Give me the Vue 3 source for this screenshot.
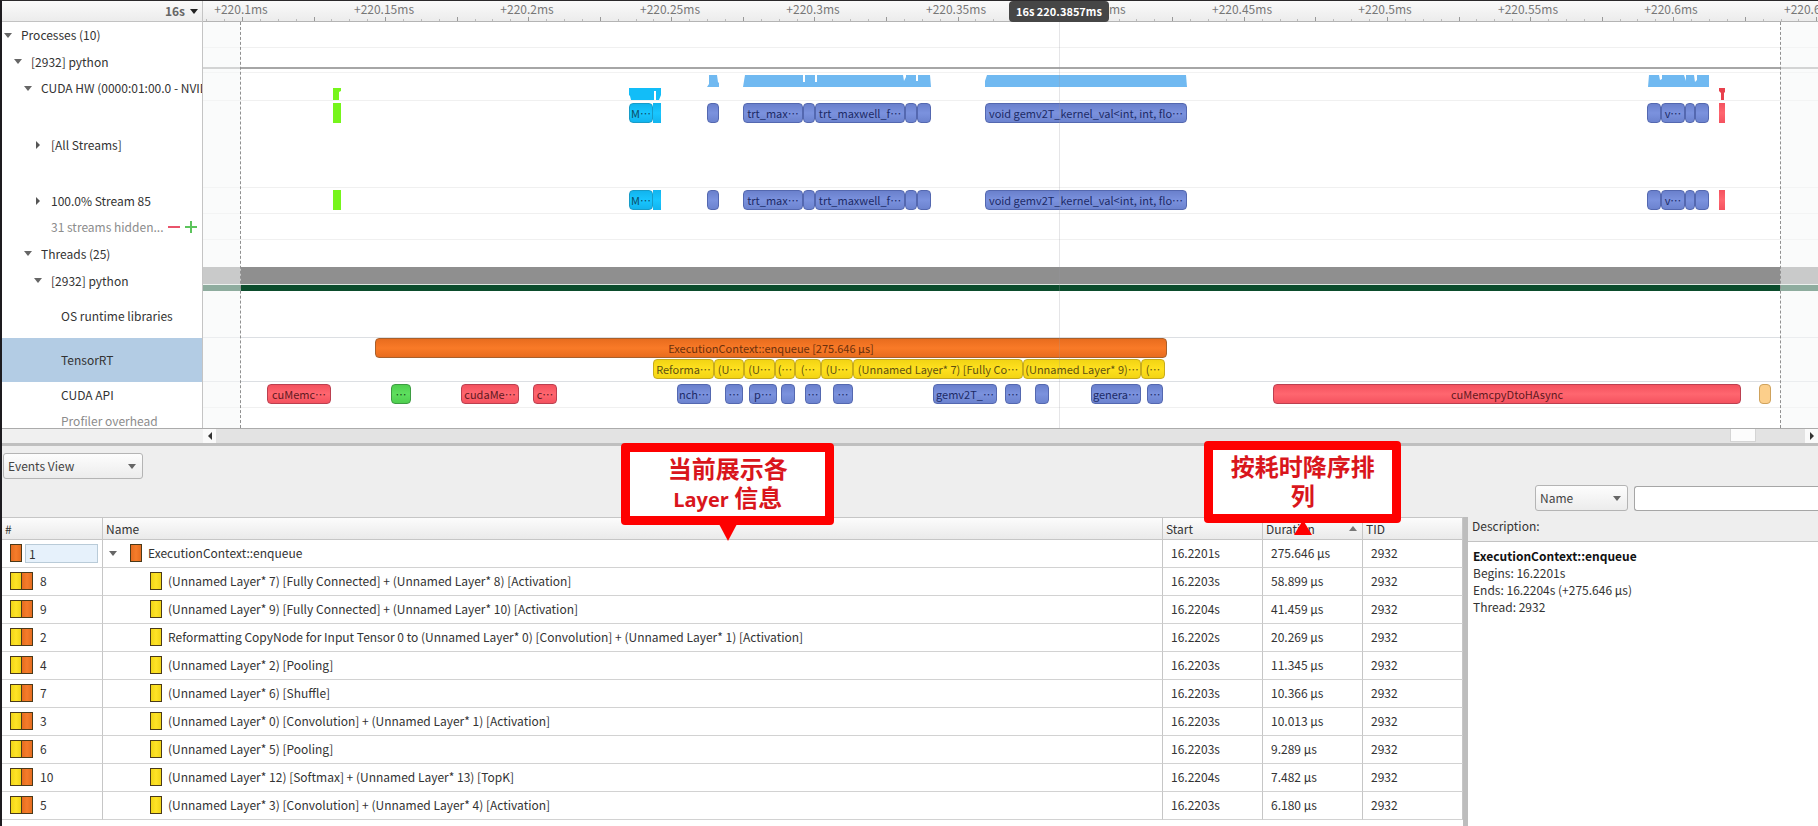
<script setup>
import { ref } from 'vue'

const SPAN = 1615
const pct = (v) => `${(v / SPAN) * 100}%`
const place = (b) => ({ left: pct(b[0] - 203), width: pct(b[1] - b[0]) })

const labels = ['+220.1ms', '+220.15ms', '+220.2ms', '+220.25ms', '+220.3ms', '+220.35ms', '+220.4ms', '+220.45ms', '+220.5ms', '+220.55ms', '+220.6ms', '+220.65ms']
const marks = labels.map((text, i) => ({ text, left: pct(38 + i * 143) }))
const ticks = Array.from({ length: 91 }, (_, i) => ({
  left: pct(3.2 + i * 17.89),
  tall: (i + 2) % 4 === 0,
}))

const tree = [
  { text: 'Processes (10)', size: 'h26', depth: 'd0', arrow: 'down' },
  { text: '[2932] python', size: 'h27', depth: 'd1', arrow: 'down' },
  { text: 'CUDA HW (0000:01:00.0 - NVIDIA)', size: 'h26', depth: 'd2', arrow: 'down' },
  { text: '[All Streams]', size: 'h87', depth: 'd3', arrow: 'right' },
  { text: '100.0% Stream 85', size: 'h26', depth: 'd3', arrow: 'right' },
  { text: '31 streams hidden...', size: 'h26', depth: 'd3', muted: true, more: true },
  { text: 'Threads (25)', size: 'h27', depth: 'd2', arrow: 'down' },
  { text: '[2932] python', size: 'h27', depth: 'd3', arrow: 'down' },
  { text: 'OS runtime libraries', size: 'h44', depth: 'd4' },
  { text: 'TensorRT', size: 'h44', depth: 'd4', selected: true },
  { text: 'CUDA API', size: 'h26', depth: 'd4' },
  { text: 'Profiler overhead', size: 'h20', depth: 'd4', muted: true },
]

// Each event: start, end, style, label, label is shortened
const kernels = [
  [333, 341, 'lime flat', ''],
  [629, 653, 'cyan', 'M', true],
  [653, 661, 'cyan flat', ''],
  [707, 719, 'blue', ''],
  [743, 803, 'blue', 'trt_max', true],
  [803, 815, 'blue', ''],
  [815, 905, 'blue', 'trt_maxwell_f', true],
  [905, 917, 'blue', ''],
  [917, 931, 'blue', ''],
  [985, 1187, 'blue', 'void gemv2T_kernel_val<int, int, flo', true],
  [1647, 1661, 'blue', ''],
  [1661, 1685, 'blue', 'v', true],
  [1685, 1695, 'blue', ''],
  [1695, 1709, 'blue', ''],
  [1719, 1725, 'red flat', ''],
]

const enqueue = [[375, 1167, 'orange', 'ExecutionContext::enqueue [275.646 µs]']]
const layers = [
  [653, 714, 'yellow', 'Reforma', true],
  [714, 744, 'yellow', '(U', true],
  [744, 775, 'yellow', '(U', true],
  [775, 795, 'yellow', '(', true],
  [795, 821, 'yellow', '(', true],
  [821, 853, 'yellow', '(U', true],
  [853, 1023, 'yellow', '(Unnamed Layer* 7) [Fully Co', true],
  [1023, 1141, 'yellow', '(Unnamed Layer* 9)', true],
  [1141, 1165, 'yellow', '(', true],
]
const api = [
  [267, 331, 'red', 'cuMemc', true],
  [391, 411, 'green', '', true],
  [461, 519, 'red', 'cudaMe', true],
  [533, 557, 'red', 'c', true],
  [677, 711, 'blue', 'nch', true],
  [725, 743, 'blue', '', true],
  [749, 777, 'blue', 'p', true],
  [781, 795, 'blue', ''],
  [805, 821, 'blue', '', true],
  [833, 853, 'blue', '', true],
  [933, 997, 'blue', 'gemv2T_', true],
  [1005, 1021, 'blue', '', true],
  [1035, 1049, 'blue', ''],
  [1091, 1141, 'blue', 'genera', true],
  [1147, 1163, 'blue', '', true],
  [1273, 1741, 'red', 'cuMemcpyDtoHAsync'],
  [1759, 1771, 'tan', ''],
]

const usage = [
  { at: [333, 341], low: true, fill: '#76f51b', d: 'M0 0H8V3L6 4V12H0Z' },
  { at: [629, 661], low: true, fill: '#12bdf8', d: 'M0 0H32V7L30 12H27V3H25V12H2L1 8L0 7Z' },
  { at: [707, 719], fill: '#70b9f1', d: 'M2 0H10L11 7L12 8V12H0L2 9Z' },
  { at: [743, 931], fill: '#70b9f1', d: 'M2 0H60V7H62V0H72V7H74V0H160L161 6L163 2V0H173V6H175V0H187L188 12H0Z' },
  { at: [985, 1187], fill: '#70b9f1', d: 'M2 0H201L202 12H0V6Z' },
  { at: [1648, 1709], fill: '#70b9f1', d: 'M1 0H11L12 5L14 4V0H36L38 6V0H46L47 7L49 5V0H61V12H0Z' },
  { at: [1719, 1725], low: true, fill: '#e8404c', d: 'M0 0H6V4L5 5V12H2V5L0 3Z' },
]

const rows = [
  ['8', '(Unnamed Layer* 7) [Fully Connected] + (Unnamed Layer* 8) [Activation]', '16.2203s', '58.899 µs'],
  ['9', '(Unnamed Layer* 9) [Fully Connected] + (Unnamed Layer* 10) [Activation]', '16.2204s', '41.459 µs'],
  ['2', 'Reformatting CopyNode for Input Tensor 0 to (Unnamed Layer* 0) [Convolution] + (Unnamed Layer* 1) [Activation]', '16.2202s', '20.269 µs'],
  ['4', '(Unnamed Layer* 2) [Pooling]', '16.2203s', '11.345 µs'],
  ['7', '(Unnamed Layer* 6) [Shuffle]', '16.2203s', '10.366 µs'],
  ['3', '(Unnamed Layer* 0) [Convolution] + (Unnamed Layer* 1) [Activation]', '16.2203s', '10.013 µs'],
  ['6', '(Unnamed Layer* 5) [Pooling]', '16.2203s', '9.289 µs'],
  ['10', '(Unnamed Layer* 12) [Softmax] + (Unnamed Layer* 13) [TopK]', '16.2204s', '7.482 µs'],
  ['5', '(Unnamed Layer* 3) [Convolution] + (Unnamed Layer* 4) [Activation]', '16.2203s', '6.180 µs'],
]

const view = ref('Events View')
const field = ref('Name')
const query = ref('')
</script>

<template>
  <main class="app">
    <section class="upper">
      <div class="tree">
        <button class="unit" type="button">16s <i class="tri down dark"></i></button>
        <div v-for="(n, i) in tree" :key="i" class="node" :class="[n.size, n.depth, { muted: n.muted, selected: n.selected }]">
          <button v-if="n.arrow" class="toggle" type="button" :aria-label="`Toggle ${n.text}`"><i class="tri" :class="n.arrow"></i></button>
          <span v-else class="toggle"></span>
          <span class="node-text">{{ n.text }}</span>
          <template v-if="n.more">
            <button class="sign" type="button" aria-label="Show fewer streams">
              <svg width="12" height="12" viewBox="0 0 12 12"><path d="M0 6H12" stroke="#e9536b" stroke-width="2" /></svg>
            </button>
            <button class="sign" type="button" aria-label="Show more streams">
              <svg width="12" height="12" viewBox="0 0 12 12"><path d="M0 6H12M6 0V12" stroke="#5cc45c" stroke-width="2" /></svg>
            </button>
          </template>
        </div>
      </div>

      <div class="timeline">
        <div class="ruler">
          <span v-for="m in marks" :key="m.text" class="mark" :style="{ left: m.left }">{{ m.text }}</span>
          <i v-for="(t, i) in ticks" :key="i" class="tick" :class="{ tall: t.tall }" :style="{ left: t.left }"></i>
        </div>
        <div class="track h26 line"></div>
        <div class="track h27"><i class="summary"></i></div>
        <div class="track h26 line">
          <svg v-for="(u, i) in usage" :key="i" class="usage" :class="{ low: u.low }" :style="place(u.at)" :viewBox="`0 0 ${u.at[1] - u.at[0]} 12`" preserveAspectRatio="none"><path :d="u.d" :fill="u.fill" /></svg>
        </div>
        <div class="track h87 line">
          <div class="lane"><span v-for="(b, i) in kernels" :key="i" class="bar" :class="b[2]" :style="place(b)">{{ b[3] }}<span v-if="b[4]" class="dots">…</span></span></div>
        </div>
        <div class="track h26 line">
          <div class="lane"><span v-for="(b, i) in kernels" :key="i" class="bar" :class="b[2]" :style="place(b)">{{ b[3] }}<span v-if="b[4]" class="dots">…</span></span></div>
        </div>
        <div class="track h26 line"></div>
        <div class="track h27"></div>
        <div class="track h27"><i class="band"></i><i class="cpu"></i></div>
        <div class="track h44 line strong"></div>
        <div class="track h44 line strong tensor">
          <div class="lane"><span v-for="(b, i) in enqueue" :key="i" class="bar" :class="b[2]" :style="place(b)">{{ b[3] }}</span></div>
          <div class="lane"><span v-for="(b, i) in layers" :key="i" class="bar" :class="b[2]" :style="place(b)">{{ b[3] }}<span v-if="b[4]" class="dots">…</span></span></div>
        </div>
        <div class="track h26 line">
          <div class="lane"><span v-for="(b, i) in api" :key="i" class="bar" :class="b[2]" :style="place(b)">{{ b[3] }}<span v-if="b[4]" class="dots">…</span></span></div>
        </div>
        <div class="track h20"></div>
        <i class="outside before"></i>
        <i class="outside after"></i>
        <i class="cursor"></i>
        <span class="cursor-tip">16s 220.3857ms</span>
      </div>
    </section>

    <div class="scroll">
      <div class="scroll-pad"></div>
      <button class="scroll-btn" type="button" aria-label="Scroll left"><i class="tri left dark"></i></button>
      <div class="scroll-track"><i class="thumb"></i></div>
      <button class="scroll-btn" type="button" aria-label="Scroll right"><i class="tri right dark"></i></button>
    </div>

    <section class="lower">
      <div class="bar-top">
        <div class="pick view-pick">
          <select v-model="view" aria-label="View"><option>Events View</option></select>
          <i class="tri down"></i>
        </div>
      </div>
      <div class="bar-filter">
        <div class="pick field-pick">
          <select v-model="field" aria-label="Search field"><option>Name</option></select>
          <i class="tri down"></i>
        </div>
        <input v-model="query" class="search" type="text" aria-label="Search text" />
      </div>

      <div class="panes">
        <div class="table-pane">
          <table>
            <colgroup><col class="c-num" /><col /><col class="c-val" /><col class="c-val" /><col class="c-val" /></colgroup>
            <thead>
              <tr>
                <th>#</th><th>Name</th><th>Start</th>
                <th aria-sort="descending"><div class="sorted"><span>Duration</span><i class="tri up"></i></div></th>
                <th>TID</th>
              </tr>
            </thead>
            <tbody>
              <tr>
                <td><div class="cell num"><i class="chip o"></i><span class="edit">1</span></div></td>
                <td><div class="cell name"><button class="toggle" type="button" aria-label="Toggle ExecutionContext::enqueue"><i class="tri down"></i></button><i class="chip o"></i><span>ExecutionContext::enqueue</span></div></td>
                <td class="val">16.2201s</td><td class="val">275.646 µs</td><td class="val">2932</td>
              </tr>
              <tr v-for="r in rows" :key="r[0]">
                <td><div class="cell num"><i class="chip y"></i><i class="chip o joined"></i><span class="idx">{{ r[0] }}</span></div></td>
                <td><div class="cell name child"><i class="chip y"></i><span>{{ r[1] }}</span></div></td>
                <td class="val">{{ r[2] }}</td><td class="val">{{ r[3] }}</td><td class="val">2932</td>
              </tr>
            </tbody>
          </table>
        </div>
        <aside class="desc">
          <h2>Description:</h2>
          <div class="desc-body">
            <strong>ExecutionContext::enqueue</strong>
            <span>Begins: 16.2201s</span>
            <span>Ends: 16.2204s (+275.646 µs)</span>
            <span>Thread: 2932</span>
          </div>
        </aside>
      </div>
    </section>

    <div class="note note-layer">当前展示各<br /><span class="latin">Layer</span> 信息<svg class="point" width="18" height="17" viewBox="0 0 18 17"><path d="M0 0H18L9 17Z" fill="#fe0000" /></svg></div>
    <div class="note note-sort">按耗时降序排列<svg class="point up-point" width="18" height="15" viewBox="0 0 18 15"><path d="M0 15H18L9 0Z" fill="#fe0000" /></svg></div>
  </main>
</template>

<style>
body { margin: 0; background: #fff; }
</style>

<style scoped>
* { box-sizing: border-box; }
.app {
  position: relative;
  display: flex;
  flex-direction: column;
  min-height: 100vh;
  overflow: hidden;
  border-left: 2px solid #1d1b1f;
  border-top: 1px solid #2b292b;
  background: #fff;
  color: #333;
  font: 12px/18px "Noto Sans CJK SC", "Noto Sans", sans-serif;
}
button { padding: 0; border: 0; background: none; color: inherit; font: inherit; display: flex; align-items: center; justify-content: center; }
.tri { display: block; flex: none; width: 0; height: 0; border: 4px solid transparent; }
.tri.down { border-top: 5px solid #666; border-bottom: 0; }
.tri.up { border-bottom: 5px solid #777; border-top: 0; }
.tri.right { border-left: 4px solid #555; border-right: 0; }
.tri.left { border-right: 4px solid #333; border-left: 0; }
.tri.down.dark { border-top-color: #222; }
.tri.right.dark { border-left-color: #333; }

.upper { display: flex; }
.tree { flex: none; width: 201px; border-right: 1px solid #c4c4c4; }
.unit { width: 100%; height: 21px; justify-content: flex-end; gap: 5px; padding-right: 4px; border-bottom: 1px solid #c2c2c2; background: linear-gradient(#fafafa, #ececec); color: #666; font-weight: 700; }
.node { display: flex; align-items: center; overflow: hidden; white-space: nowrap; }
.node.muted { color: #8c8c8c; }
.node.selected { background: #b3cce4; }
.toggle { flex: none; width: 10px; height: 18px; margin-right: 8px; }
.d0 { padding-left: 1px; }
.d1 { padding-left: 11px; }
.d2 { padding-left: 21px; }
.d3 { padding-left: 31px; }
.d4 { padding-left: 41px; }
.sign { margin-left: 5px; }
.h20 { height: 20px; }
.node.h20 { align-items: flex-start; padding-top: 4px; }
.h26 { height: 26px; }
.h27 { height: 27px; }
.h44 { height: 44px; }
.h87 { height: 87px; }

.timeline { position: relative; flex: 1; min-width: 0; overflow: hidden; }
.ruler { position: relative; height: 21px; border-bottom: 1px solid #b4b4b4; background: linear-gradient(#fafafa, #ececec); color: #777; }
.mark { position: absolute; top: -1px; transform: translateX(-50%); white-space: nowrap; }
.tick { position: absolute; bottom: 0; width: 1px; height: 2px; background: #bbb; }
.tick.tall { height: 4px; background: #999; }
.track { position: relative; }
.line { border-bottom: 1px solid #f0f0f0; }
.line.strong { border-bottom-color: #dcdfe3; }
.summary { position: absolute; left: 0; right: 0; top: 19px; height: 6px; border-top: 2px solid #a6a6a6; border-bottom: 1px solid #f2f2f2; }
.usage { position: absolute; top: 0; height: 12px; }
.usage.low { top: 13px; }
.lane { position: relative; height: 21px; padding-top: 2px; }
.tensor .lane { padding-top: 0; }
.lane .bar { position: absolute; height: 20px; }
.bar { overflow: hidden; border: 1px solid #5468b0; border-radius: 4px; font-size: 11px; text-align: center; white-space: nowrap; line-height: 18px; }
.dots { display: inline-block; }
.blue { background: linear-gradient(#6a80cc, #7b92de 50%, #6c83cf); color: #1c2a66; }
.red { background: linear-gradient(#f4525f, #ff666f 50%, #f4525f); border-color: #bb4050; color: #5f1820; }
.green { background: linear-gradient(#4fcf4f, #5edf5e 50%, #4fcf4f); border-color: #3d9c42; color: #174f1b; }
.lime { background: #76f51b; }
.cyan { background: linear-gradient(#12b4ee, #19c6ff 50%, #12b4ee); border-color: #189cc8; color: #0c4a66; }
.orange { background: linear-gradient(#e86c1e, #f97a27 50%, #e86c1e); border-color: #a8602c; color: #6b300c; }
.yellow { background: linear-gradient(#f2d414, #ffe11f 50%, #f2d414); border-color: #c8ac1c; color: #5e5010; }
.tan { background: #fccf8b; border-color: #cfa25c; }
.bar.flat { border: 0; border-radius: 0; }
.band { display: block; height: 17px; background: #8f8f8f; }
.cpu { display: block; height: 7px; border-top: 1px solid #dfe8e2; background: #0b4c2c; }
.outside { position: absolute; top: 21px; bottom: 0; background: rgba(246, 247, 248, 0.56); }
.before { left: 0; width: 2.35%; border-right: 1px dashed #909090; }
.after { left: 97.65%; right: 0; border-left: 1px dashed #909090; }
.cursor { position: absolute; top: 21px; bottom: 0; left: 53%; width: 1px; background: rgba(150, 150, 160, 0.25); }
.cursor-tip { position: absolute; top: 0; left: 53%; width: 100px; height: 21px; transform: translateX(-50%); border-radius: 4px; background: #464646; color: #fff; font-size: 11px; font-weight: 700; line-height: 21px; text-align: center; white-space: nowrap; }

.scroll { display: flex; height: 18px; border-top: 1px solid #ababab; border-bottom: 3px solid #bfbfbf; background: #e3e3e3; }
.scroll-pad { flex: none; width: 201px; background: #f0f0f0; }
.scroll-btn { flex: none; width: 13px; height: 14px; background: #fafafa; }
.scroll-track { position: relative; flex: 1; }
.thumb { position: absolute; left: 95.3%; width: 26px; top: 0; height: 13px; background: #fcfcfc; border: 1px solid #d4d4d4; border-top: 0; }

.lower { display: flex; flex-direction: column; flex: 1; background: #eee; }
.bar-top { padding: 7px 0 0 1px; }
.bar-filter { display: flex; align-items: center; justify-content: flex-end; gap: 6px; height: 26px; margin: 6px 0; }
.pick { position: relative; height: 26px; }
.view-pick { width: 140px; }
.field-pick { width: 93px; }
.pick select { width: 100%; height: 100%; padding: 0 4px; border: 1px solid #b4b4b4; border-radius: 3px; background: linear-gradient(#fdfdfd, #ececec); color: #444; font: inherit; appearance: none; }
.pick .tri { position: absolute; right: 7px; top: 11px; pointer-events: none; }
.search { width: 184px; height: 25px; padding: 0 5px; border: 1px solid #a6a6a6; border-right: 0; border-radius: 3px 0 0 3px; background: #fff; font: inherit; }
.panes { display: flex; flex: 1; }
.table-pane { flex: 1; min-width: 0; background: #fff; border-right: 5px solid #bdbdbd; }
table { width: 100%; table-layout: fixed; border-collapse: separate; border-spacing: 0; }
.c-num { width: 101px; }
.c-val { width: 100px; }
th { height: 23px; padding: 0 3px; border: 1px solid #c6c6c6; border-left: 0; background: linear-gradient(#fcfcfc, #eaeaea); font-weight: 400; text-align: left; }
td { height: 28px; padding: 0 0 1px; border-right: 1px solid #c6c6c6; border-bottom: 1px solid #d2d2d2; white-space: nowrap; }
td.val { padding-left: 8px; }
.sorted { display: flex; justify-content: space-between; align-items: center; padding-right: 2px; }
.cell { display: flex; align-items: center; }
.num { padding: 0 4px 0 8px; }
.name { padding-left: 5px; }
.name .toggle { margin-right: 12px; }
.name .chip { margin-right: 6px; }
.child { padding-left: 47px; }
.chip { flex: none; width: 12px; height: 18px; border: 1px solid #4a3a1a; }
.chip.o { background: linear-gradient(90deg, #e56d20, #f57c2a 50%, #e56d20); }
.chip.y { background: linear-gradient(90deg, #f0d418, #ffe326 50%, #f0d418); }
.joined { margin-left: -1px; }
.edit { flex: 1; height: 19px; margin-left: 3px; padding-left: 3px; border: 1px solid #b9cbd8; background: #e6f1fb; line-height: 17px; }
.idx { margin-left: 7px; }

.desc { width: 350px; display: flex; flex-direction: column; }
h2 { margin: 0; height: 24px; padding: 0 4px; font: inherit; }
.desc-body { flex: 1; display: flex; flex-direction: column; padding: 5px; border-top: 1px solid #c2c2c2; background: #fff; line-height: 17px; }
.desc-body strong { color: #111; }

.note { position: absolute; height: 82px; padding-top: 1px; border: 9px solid #fe0000; border-radius: 4px; background: #fff; color: #d9161c; font-size: 24px; font-weight: 700; line-height: 29px; text-align: center; }
.note-layer { left: 34.1%; top: 442px; width: 213px; }
.note-sort { left: 66.2%; top: 440px; width: 197px; padding-left: 16px; padding-right: 16px; }
.latin { font-family: "Open Sans", sans-serif; font-size: 20px; line-height: 20px; }
.point { position: absolute; left: 50%; top: 100%; transform: translateX(-50%); margin-top: 8px; }
.up-point { margin-top: 6px; }
</style>
